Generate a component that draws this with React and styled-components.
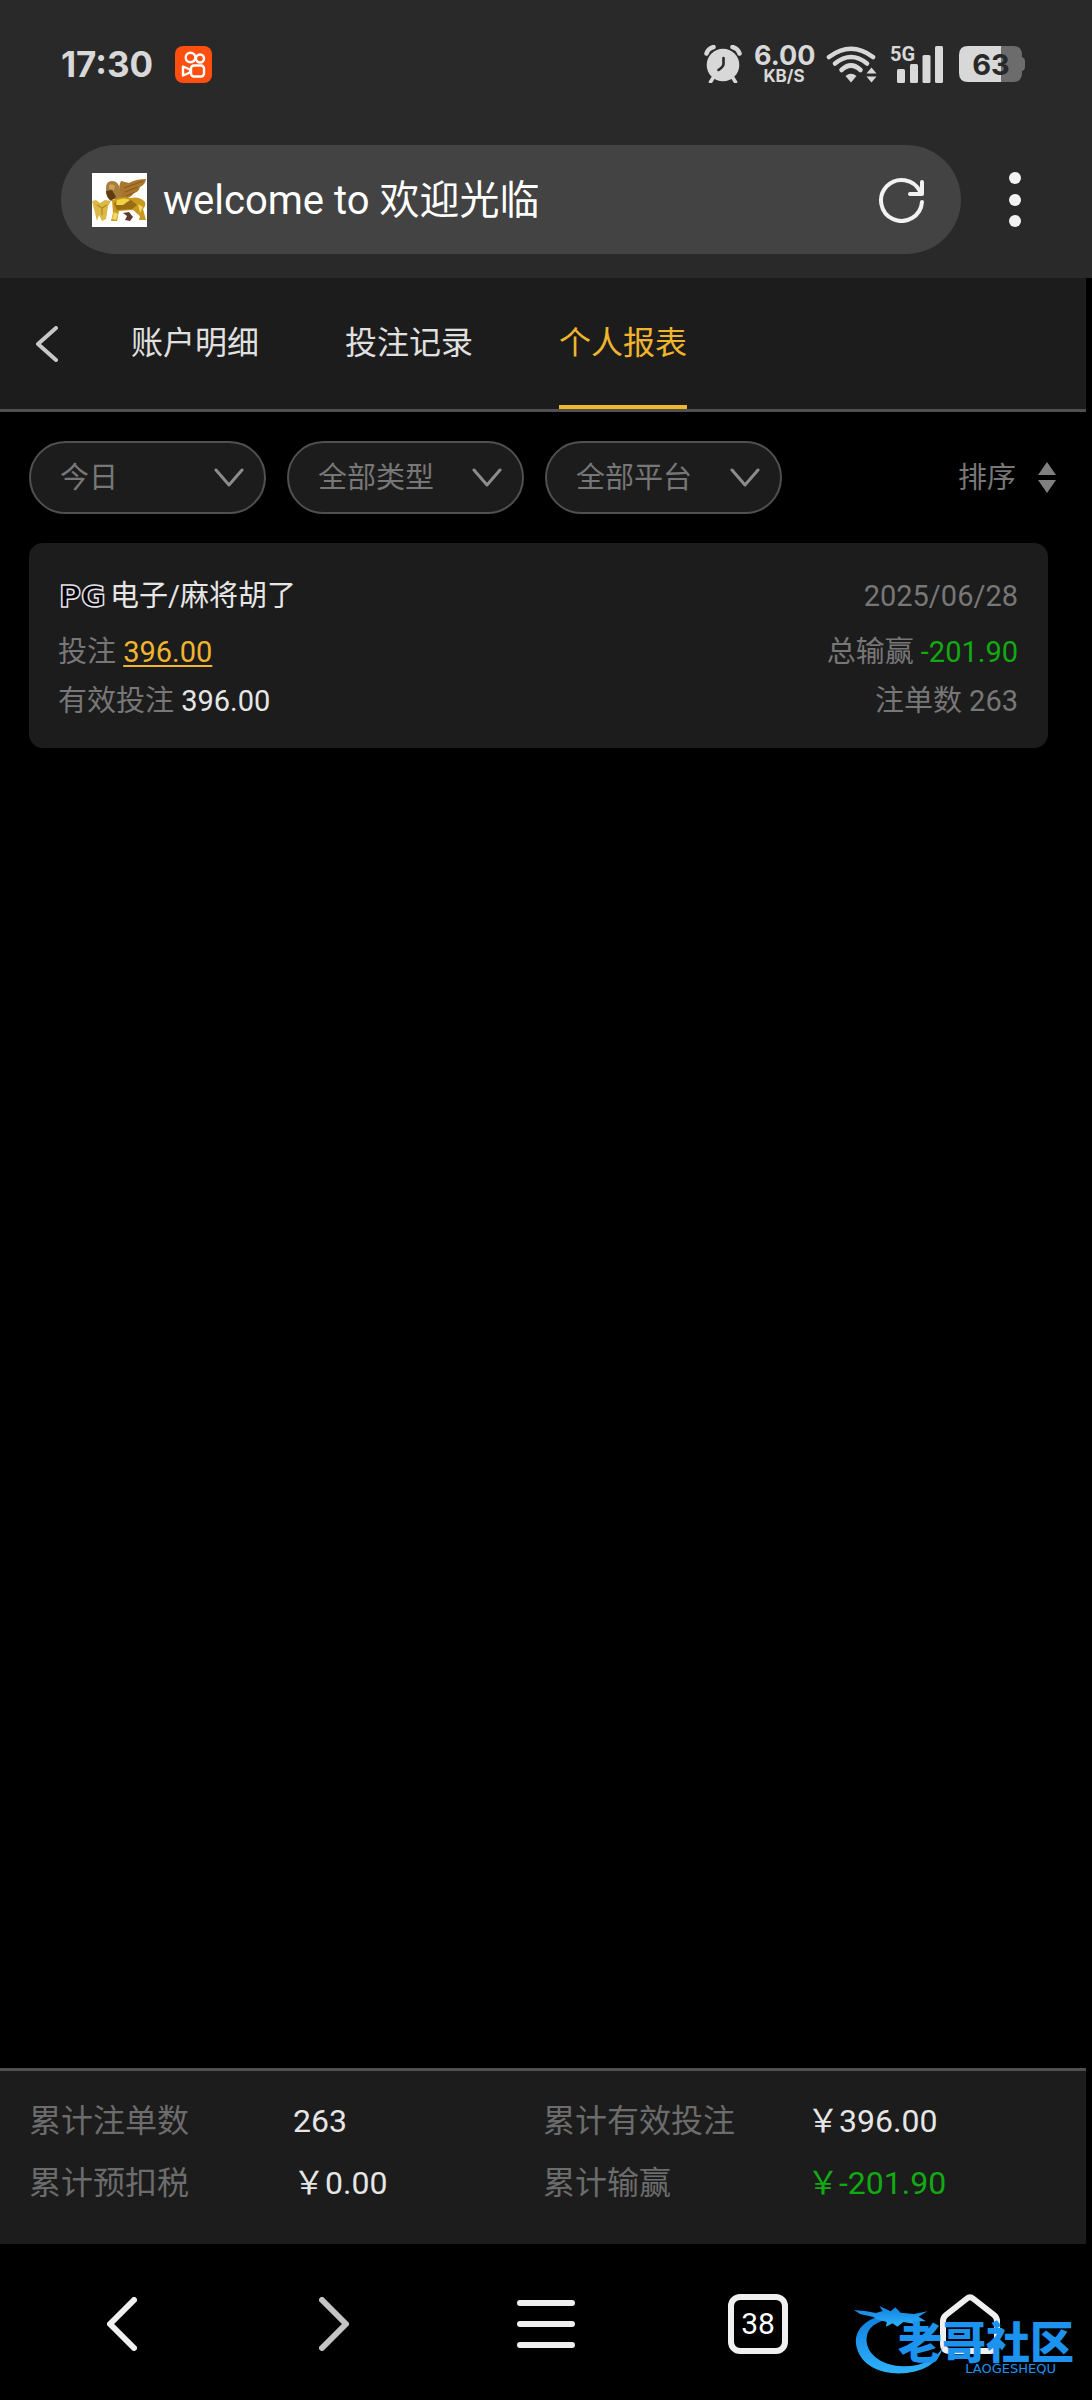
import React, { useState } from 'react';
import styled, { createGlobalStyle } from 'styled-components';

const GlobalStyle = createGlobalStyle`
  * {
    box-sizing: border-box;
  }

  body {
    margin: 0;
    background-color: #000000;
    font-family: Roboto, 'Noto Sans CJK SC', sans-serif;
  }

  button, input, select {
    margin: 0;
    padding: 0;
    border: none;
    background: none;
    color: inherit;
    font: inherit;
  }

  svg {
    display: block;
    flex-shrink: 0;
  }
`;

const Page = styled.div`
  display: flex;
  flex-direction: column;
  min-height: 100vh;
`;

const BrowserTop = styled.header`
  padding: 40px 0 24px 61px;
  background-color: #292929;
`;

const StatusBar = styled.div`
  display: flex;
  align-items: center;
  justify-content: space-between;
  height: 48px;
  padding-right: 67px;
  color: #d8d8d8;
`;

const StatusGroup = styled.div`
  display: flex;
  align-items: center;
  gap: ${(props) => props.$gap}px;
`;

const Time = styled.span`
  font-family: Inter, sans-serif;
  font-size: 35px;
  font-weight: 700;
  line-height: 46px;
`;

const Speed = styled.div`
  width: 60px;
  font-family: Inter, sans-serif;
  font-size: 27px;
  font-weight: 700;
  line-height: 24px;
  text-align: center;

  small {
    display: block;
    font-size: 17px;
    line-height: 16px;
  }
`;

const AddressRow = styled.div`
  display: flex;
  align-items: center;
  margin-top: 57px;
`;

const AddressBar = styled.div`
  display: flex;
  flex: 1;
  align-items: center;
  gap: 16px;
  height: 109px;
  padding: 0 36px 0 31px;
  border-radius: 55px;
  background-color: #434343;
`;

const AddressInput = styled.input`
  flex: 1;
  min-width: 0;
  padding-top: 3px;
  color: #ffffff;
  font-size: 40px;
  line-height: 56px;
  outline: none;
`;

const IconButton = styled.button`
  display: flex;
  align-items: center;
  justify-content: center;
  cursor: pointer;
`;

const MoreButton = styled(IconButton)`
  width: 60px;
  height: 60px;
  margin: 0 47px 0 24px;
`;

const TabBar = styled.nav`
  display: flex;
  height: 134px;
  margin-right: 6px;
  padding-left: 35px;
  border-bottom: 3px solid #505050;
  background-color: #1c1c1c;
`;

const BackButton = styled(IconButton)`
  width: 24px;
  margin-right: 72px;
`;

const TabList = styled.div`
  display: flex;
  gap: 86px;
`;

const Tab = styled.button`
  padding-top: 2px;
  border-bottom: 4px solid ${(props) => (props.$active ? '#f0b52d' : 'transparent')};
  color: ${(props) => (props.$active ? '#f0b52d' : '#e0e0e0')};
  font-size: 32px;
  line-height: 48px;
  cursor: pointer;
`;

const Main = styled.main`
  flex: 1;
  padding: 29px 44px 29px 29px;
`;

const FilterRow = styled.div`
  display: flex;
  align-items: center;
  gap: 21px;
`;

const SelectPill = styled.label`
  display: grid;
  align-items: center;
  width: 237px;
  height: 73px;
  border: 2px solid #505050;
  border-radius: 37px;
  background-color: #1c1c1c;

  select, svg {
    grid-area: 1 / 1;
  }

  svg {
    justify-self: end;
    margin-right: 20px;
    pointer-events: none;
  }
`;

const Select = styled.select`
  width: 100%;
  height: 100%;
  padding: 0 60px 0 29px;
  border-radius: 37px;
  appearance: none;
  color: #777777;
  font-size: 29px;
  outline: none;

  option {
    background-color: #1c1c1c;
  }
`;

const SortButton = styled.button`
  display: flex;
  align-items: center;
  gap: 22px;
  margin: 0 -8px 0 auto;
  color: #777777;
  font-size: 29px;
  line-height: 40px;
  cursor: pointer;
`;

const Card = styled.article`
  margin-top: 29px;
  padding: 31px 30px 22px 29px;
  border-radius: 14px;
  background-color: #1c1c1c;
  color: #777777;
  font-size: 29px;
`;

const CardHead = styled.div`
  display: flex;
  align-items: center;
  margin-bottom: 10px;
  line-height: 44px;
`;

const GameTitle = styled.h2`
  flex: 1;
  margin: 0 0 0 2px;
  color: #e6e6e6;
  font-size: 29px;
  font-weight: 400;
`;

const CardRow = styled.div`
  display: flex;
  justify-content: space-between;
  line-height: 49px;
`;

const Value = styled.span`
  color: ${(props) => (props.$loss ? '#12aa12' : '#e6e6e6')};
`;

const BetLink = styled.a`
  color: #f0b52d;
  text-decoration: underline;
  text-decoration-thickness: 2px;
  text-underline-offset: 3px;
`;

const Summary = styled.dl`
  display: grid;
  grid-template-columns: 1fr 1fr;
  margin: 0 6px 0 0;
  padding: 19px 29px 30px;
  border-top: 3px solid #505050;
  background-color: #1c1c1c;
  font-size: 32px;
  line-height: 62px;
`;

const SummaryItem = styled.div`
  display: flex;

  dt {
    flex: 0 0 264px;
    color: #6c6c6c;
  }

  dd {
    margin: 0;
    color: ${(props) => (props.$loss ? '#12aa12' : '#e6e6e6')};
  }
`;

const BottomNav = styled.nav`
  position: relative;
  display: flex;
  height: 156px;
  padding: 4px 16px 0;

  button {
    flex: 1;
  }
`;

const TabCount = styled.span`
  width: 60px;
  height: 60px;
  border: 6px solid #f0f0f0;
  border-radius: 12px;
  color: #ffffff;
  font-size: 30px;
  line-height: 48px;
`;

const Watermark = styled.div`
  position: absolute;
  right: 18px;
  bottom: 24px;
  display: flex;
  align-items: flex-end;
  color: #1c93ef;
  pointer-events: none;
`;

const WatermarkText = styled.div`
  margin-left: -46px;
  font-family: 'Noto Sans CJK SC', sans-serif;
  font-size: 44px;
  font-weight: 900;
  line-height: 44px;

  small {
    display: block;
    padding-right: 18px;
    font-family: 'DejaVu Sans', sans-serif;
    font-size: 13px;
    font-weight: 400;
    line-height: 14px;
    text-align: right;
  }
`;

const AppBadge = () => (
  <svg width="37" height="37" viewBox="0 0 37 37" fill="none">
    <rect width="37" height="37" rx="8" fill="#fe4f10" />
    <g stroke="#ffffff" strokeWidth="2.4" strokeLinejoin="round">
      <circle cx="15.5" cy="11.5" r="4.8" />
      <circle cx="25" cy="12.5" r="4" />
      <rect x="16" y="19.5" width="13" height="11" rx="3" />
      <path d="M8 20.500v9l7-3v-3z" />
    </g>
  </svg>
);

const AlarmIcon = () => (
  <svg width="38" height="38" viewBox="0 0 38 38" fill="none" strokeLinecap="round">
    <circle cx="19" cy="20" r="16.3" fill="#d8d8d8" />
    <path d="M9 33l-2.500 4M29 33l2.500 4" stroke="#d8d8d8" strokeWidth="3.500" />
    <path d="M2.500 8.500Q4 3.500 9.500 2M35.500 8.500Q34 3.500 28.500 2" stroke="#d8d8d8" strokeWidth="4.500" />
    <path d="M19.500 13v6q0 2.500-5 6" stroke="#292929" strokeWidth="2.600" />
  </svg>
);

const WifiIcon = () => (
  <svg width="51" height="38" viewBox="0 0 51 38" fill="none" strokeLinecap="round">
    <g stroke="#d8d8d8" strokeWidth="4.600">
      <path d="M3 12Q25-4.500 47 12" />
      <path d="M9 18.500Q25 5.500 41 18.500" />
      <path d="M15.500 25Q25 16 34.500 25" />
    </g>
    <path d="M19.500 31Q25 26.500 30.500 31L25 37.500z" fill="#d8d8d8" />
    <path d="M45.500 22.500l5 6h-10zM45.500 37.500l5-6h-10z" fill="#d8d8d8" />
  </svg>
);

const SignalIcon = () => (
  <svg width="54" height="46" viewBox="-2 -4 54 46" fill="#d8d8d8">
    <text x="-1" y="16" fontFamily="Roboto, sans-serif" fontSize="20" fontWeight="700">5G</text>
    <rect x="6" y="24" width="8" height="14" rx="1.500" />
    <rect x="19" y="19" width="8" height="19" rx="1.500" />
    <rect x="31.500" y="10" width="8" height="28" rx="1.500" />
    <rect x="44" y="1" width="8" height="37" rx="1.500" />
  </svg>
);

const BatteryIcon = () => (
  <svg width="70" height="36" viewBox="-4 0 70 36">
    <path d="M40 0h14q9 0 9 9v2q3 1 3 4v6q0 3-3 4v2q0 9-9 9H40z" fill="#6c6c6c" />
    <path d="M42 0H9Q0 0 0 9v18q0 9 9 9h33z" fill="#d8d8d8" />
    <text x="32" y="29" textAnchor="middle" fontFamily="Inter, sans-serif" fontSize="29" fontWeight="700" fill="#292929">63</text>
  </svg>
);

const LionIcon = () => (
  <svg width="55" height="54" viewBox="0 0 55 54">
    <rect width="55" height="54" fill="#ffffff" />
    <path d="M28 23Q26 13 29 8L37 10Q44 6 54 6Q53 12 48 14Q47 19 42 20Q38 26 30 26z" fill="#a9762c" />
    <path d="M32 15L51 8M33 19L46 14M34 23L43 19" stroke="#845820" strokeWidth="1" />
    <path d="M14 15Q14 8 20 8Q27 8 28 17L31 26H20Q14 24 14 15z" fill="#a87d3c" />
    <path d="M14 18L20 17L24 24L19 28Q14 24 14 18z" fill="#5e3c10" />
    <path d="M17 12Q20 10 23 13L22 17L17 16z" fill="#c9a05c" />
    <path d="M20 27Q30 23 38 25Q48 23 53 29Q54 33 51 36L54 47H47L48 43L41 37L27 38L25 48H19L21 40z" fill="#c8981f" />
    <path d="M22 30L39 27L45 32L40 36L25 37z" fill="#9a6c12" />
    <path d="M25 27Q33 24 38 27L31 32L24 32z" fill="#f0d340" />
    <path d="M0 28L4 27L8 30L13 27L19 28L16 33L15 40L14 46L10 48L7 42L5 48L2 36z" fill="#dcb844" />
    <path d="M5 32l5 3l5-3M10 35v7" stroke="#b08a28" strokeWidth="1.300" fill="none" />
    <path d="M20 46L22 39L26 41L24 47zM46 31L51 34L48 40z" fill="#efd863" />
    <path d="M31 40L37 39L41 44L38 48L33 47L35 43z" fill="#5d3b2c" />
  </svg>
);

const ReloadIcon = () => (
  <svg width="46" height="46" viewBox="0 0 46 46" fill="none" stroke="#f2f2f2" strokeWidth="4" strokeLinecap="round" strokeLinejoin="round">
    <path d="M43 25A20.500 20.500 0 1 1 41 14.500" />
    <path d="M43 5v12H31" />
  </svg>
);

const MoreIcon = () => (
  <svg width="12" height="56" viewBox="0 0 12 56" fill="#f2f2f2">
    <circle cx="6" cy="6" r="6" />
    <circle cx="6" cy="28" r="6" />
    <circle cx="6" cy="49" r="6" />
  </svg>
);

const Chevron = ({ width, height, d, color, stroke }) => (
  <svg
    width={width}
    height={height}
    viewBox={`0 0 ${width} ${height}`}
    fill="none"
    stroke={color}
    strokeWidth={stroke}
    strokeLinecap="round"
    strokeLinejoin="round"
  >
    <path d={d} />
  </svg>
);

const SortIcon = () => (
  <svg width="18" height="31" viewBox="0 0 18 31" fill="#808080">
    <path d="M9 0l9 13H0zM9 31l9-13H0z" />
  </svg>
);

const PgLogo = () => (
  <svg width="50" height="38" viewBox="-1 0 50 38">
    <text
      x="0"
      y="30"
      fontFamily="DejaVu Sans, sans-serif"
      fontSize="30"
      fontWeight="700"
      fill="#000000"
      stroke="#e4e0ec"
      strokeWidth="1.500"
    >
      PG
    </text>
  </svg>
);

const MenuIcon = () => (
  <svg width="58" height="48" viewBox="0 0 58 48" stroke="#f0f0f0" strokeWidth="6" strokeLinecap="round">
    <path d="M3 3h52M3 24h52M3 45h52" />
  </svg>
);

const HomeIcon = () => (
  <svg width="60" height="60" viewBox="0 0 60 60" fill="none" stroke="#f0f0f0" strokeWidth="6" strokeLinejoin="round">
    <path d="M27 4.500Q30 2 33 4.500L54 21Q57 23.500 57 27V50Q57 57 50 57H10Q3 57 3 50V27Q3 23.500 6 21z" />
  </svg>
);

const DragonIcon = () => (
  <svg width="90" height="72" viewBox="42 70 270 216">
    <defs>
      <linearGradient id="dragon" x1="0" y1="0" x2="0" y2="1">
        <stop offset="0" stopColor="#0f7fe0" />
        <stop offset="1" stopColor="#2fb2fa" />
      </linearGradient>
    </defs>
    <g fill="url(#dragon)">
      <path d="M125 105C60 120 40 165 50 200C65 260 130 282 190 278C250 274 300 245 308 200C290 235 245 258 190 257C130 256 85 225 80 185C78 150 95 125 150 115z" />
      <path d="M42 88L80 92L108 97L128 91L118 76L152 92L166 80L182 96L222 100L262 92L236 108L258 122L224 122L240 132L190 124L172 138L158 128L138 138L140 124L112 116L98 108L60 100z" />
    </g>
  </svg>
);

const tabs = ['账户明细', '投注记录', '个人报表'];
const filters = [
  { label: '日期', value: '今日' },
  { label: '类型', value: '全部类型' },
  { label: '平台', value: '全部平台' },
];
const totals = [
  { label: '累计注单数', value: '263' },
  { label: '累计有效投注', value: '￥396.00' },
  { label: '累计预扣税', value: '￥0.00' },
  { label: '累计输赢', value: '￥-201.90', loss: true },
];

function App() {
  const [activeTab, setActiveTab] = useState('个人报表');

  return (
    <Page>
      <GlobalStyle />
      <BrowserTop>
        <StatusBar>
          <StatusGroup $gap={22}>
            <Time>17:30</Time>
            <AppBadge />
          </StatusGroup>
          <StatusGroup $gap={12}>
            <AlarmIcon />
            <Speed>
              6.00<small>KB/S</small>
            </Speed>
            <WifiIcon />
            <SignalIcon />
            <BatteryIcon />
          </StatusGroup>
        </StatusBar>
        <AddressRow>
          <AddressBar>
            <LionIcon />
            <AddressInput type="text" aria-label="地址栏" defaultValue="welcome to 欢迎光临" />
            <IconButton type="button" aria-label="刷新">
              <ReloadIcon />
            </IconButton>
          </AddressBar>
          <MoreButton type="button" aria-label="更多">
            <MoreIcon />
          </MoreButton>
        </AddressRow>
      </BrowserTop>

      <TabBar>
        <BackButton type="button" aria-label="返回">
          <Chevron width={24} height={36} d="M21 2L3 18L21 34" color="#c8c8c8" stroke={4} />
        </BackButton>
        <TabList>
          {tabs.map((tab) => (
            <Tab key={tab} type="button" $active={tab === activeTab} onClick={() => setActiveTab(tab)}>
              {tab}
            </Tab>
          ))}
        </TabList>
      </TabBar>

      <Main>
        <FilterRow>
          {filters.map((filter) => (
            <SelectPill key={filter.label}>
              <Select aria-label={filter.label}>
                <option>{filter.value}</option>
              </Select>
              <Chevron width={30} height={20} d="M2 2L15 17L28 2" color="#8c8c8c" stroke={3} />
            </SelectPill>
          ))}
          <SortButton type="button">
            排序
            <SortIcon />
          </SortButton>
        </FilterRow>

        <Card>
          <CardHead>
            <PgLogo />
            <GameTitle>电子/麻将胡了</GameTitle>
            <time>2025/06/28</time>
          </CardHead>
          <CardRow>
            <span>
              投注 <BetLink href="#bets">396.00</BetLink>
            </span>
            <span>
              总输赢 <Value $loss>-201.90</Value>
            </span>
          </CardRow>
          <CardRow>
            <span>
              有效投注 <Value>396.00</Value>
            </span>
            <span>注单数 263</span>
          </CardRow>
        </Card>
      </Main>

      <Summary>
        {totals.map((item) => (
          <SummaryItem key={item.label} $loss={item.loss}>
            <dt>{item.label}</dt>
            <dd>{item.value}</dd>
          </SummaryItem>
        ))}
      </Summary>

      <BottomNav>
        <IconButton type="button" aria-label="后退">
          <Chevron width={30} height={54} d="M27 3L3 27L27 51" color="#f0f0f0" stroke={6} />
        </IconButton>
        <IconButton type="button" aria-label="前进">
          <Chevron width={30} height={54} d="M3 3L27 27L3 51" color="#c4c4c4" stroke={6} />
        </IconButton>
        <IconButton type="button" aria-label="菜单">
          <MenuIcon />
        </IconButton>
        <IconButton type="button" aria-label="标签页">
          <TabCount>38</TabCount>
        </IconButton>
        <IconButton type="button" aria-label="主页">
          <HomeIcon />
        </IconButton>
        <Watermark>
          <DragonIcon />
          <WatermarkText>
            老哥社区<small>LAOGESHEQU</small>
          </WatermarkText>
        </Watermark>
      </BottomNav>
    </Page>
  );
}

export default App;
